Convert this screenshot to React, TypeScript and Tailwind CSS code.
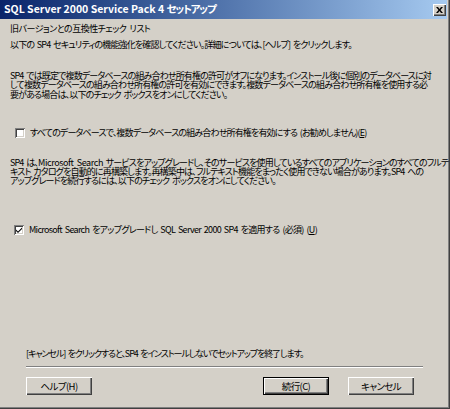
import React from 'react';

const jp = "font-['Noto_Sans_CJK_JP',sans-serif] [font-feature-settings:'palt']";

function Checkbox({ checked }: { checked?: boolean }) {
  return (
    <span className="w-[10px] h-[10px] bg-white shrink-0 flex items-center justify-center shadow-[inset_1px_1px_0_#808080,inset_-1px_-1px_0_#ffffff,inset_2px_2px_0_#404040,inset_-2px_-2px_0_#d4d0c8]">
      {checked && (
        <svg width="8" height="8" viewBox="0 0 8 8">
          <path d="M1 3.5 L3 5.5 L7 1.5 L7 3 L3 7 L1 5 Z" fill="#000" />
        </svg>
      )}
    </span>
  );
}

function Button({ label, isDefault }: { label: string; isDefault?: boolean }) {
  return (
    <div
      className={
        'w-[66px] h-[18px] bg-[#d4d0c8] flex items-center justify-center text-[9.5px] tracking-[-0.6px] text-black ' +
        jp +
        (isDefault
          ? ' shadow-[inset_1px_1px_0_#000,inset_-1px_-1px_0_#000,inset_2px_2px_0_#ffffff,inset_-2px_-2px_0_#404040,inset_-3px_-3px_0_#808080]'
          : ' shadow-[inset_1px_1px_0_#ffffff,inset_-1px_-1px_0_#404040,inset_-2px_-2px_0_#808080]')
      }
    >
      {label}
    </div>
  );
}

export default function App() {
  return (
    <div className="w-[450px] h-[409px] bg-[#d4d0c8] flex flex-col overflow-hidden shadow-[inset_-1px_-1px_0_#404040,inset_-2px_-2px_0_#808080]">
      <div className="h-[19px] mr-[3px] flex items-center justify-between pl-[4px] pr-[1px] bg-gradient-to-r from-[#0a246a] to-[#a6caf0]">
        <span className={'text-white font-bold text-[10.5px] leading-none ' + jp}>
          SQL Server 2000 Service Pack 4 <span className="tracking-[-1.2px]">セットアップ</span>
        </span>
        <div className="w-[13px] h-[12px] bg-[#d4d0c8] flex items-center justify-center shadow-[inset_1px_1px_0_#ffffff,inset_-1px_-1px_0_#404040,inset_-2px_-2px_0_#808080]">
          <svg width="7" height="6" viewBox="0 0 7 6">
            <path d="M0 0 L2 0 L3.5 2 L5 0 L7 0 L4.5 3 L7 6 L5 6 L3.5 4 L2 6 L0 6 L2.5 3 Z" fill="#000" />
          </svg>
        </div>
      </div>

      <div className={'flex-1 flex flex-col text-[9px] tracking-[-0.85px] [word-spacing:1.5px] text-black whitespace-nowrap ' + jp}>
        <div className="px-[10px]">
          <p className="mt-[4px] leading-[12px] tracking-[-0.5px]">旧バージョンとの互換性チェック リスト</p>
          <p className="mt-[4px] leading-[12px]">
            以下の SP4 セキュリティの機能強化を確認してください。詳細については、[ヘルプ] をクリックします。
          </p>
          <p className="mt-[20px] leading-[9.3px]">
            SP4 では既定で複数データベースの組み合わせ所有権の許可がオフになります。インストール後に個別のデータベースに対
            <br />
            して複数データベースの組み合わせ所有権の許可を有効にできます。複数データベースの組み合わせ所有権を使用する必
            <br />
            要がある場合は、以下のチェック ボックスをオンにしてください。
          </p>
          <label className="mt-[28px] ml-[5px] flex items-center gap-[5px] h-[12px] tracking-[-0.85px]">
            <Checkbox />
            <span>すべてのデータベースで、複数データベースの組み合わせ所有権を有効にする (お勧めしません)(<u>E</u>)</span>
          </label>
          <p className="mt-[19px] leading-[9.3px]">
            SP4 は、<span className="tracking-[-0.4px]">Microsoft Search</span> サービスをアップグレードし、そのサービスを使用しているすべてのアプリケーションのすべてのフルテ
            <br />
            キスト カタログを自動的に再構築します。再構築中は、フルテキスト機能をまったく使用できない場合があります。SP4 への
            <br />
            アップグレードを続行するには、以下のチェック ボックスをオンにしてください。
          </p>
          <label className="mt-[38px] ml-[4px] flex items-center gap-[5px] h-[12px] tracking-[-0.7px]">
            <Checkbox checked />
            <span>Microsoft Search をアップグレードし SQL Server 2000 SP4 を適用する (必須) (<u>U</u>)</span>
          </label>
        </div>

        <div className="mt-auto px-[26px] pr-[27px]">
          <p className="leading-[12px] tracking-[-1.1px]">
            [キャンセル] をクリックすると、SP4 をインストールしないでセットアップを終了します。
          </p>
          <div className="mt-[6px] h-[2px] border-t border-[#808080] border-b border-b-white" />
          <div className="mt-[9px] mb-[14px] flex items-center">
            <Button label="ヘルプ(H)" />
            <div className="ml-auto flex gap-[19px] mr-[9px]">
              <Button label="続行(C)" isDefault />
              <Button label="キャンセル" />
            </div>
          </div>
        </div>
      </div>
    </div>
  );
}
